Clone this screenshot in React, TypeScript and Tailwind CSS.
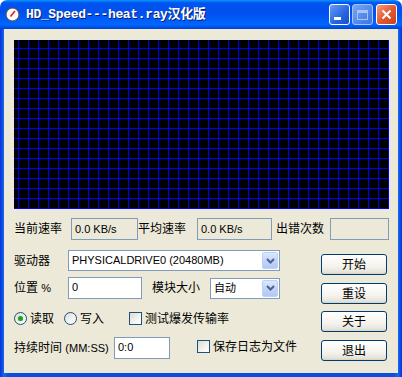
import React from 'react';

const FONT = "font-['Liberation_Sans','Noto_Sans_CJK_SC',sans-serif]";

function SpeedGrid() {
  const xs = Array.from({ length: 38 }, (_, i) => 4.5 + i * 10);
  const ys = Array.from({ length: 17 }, (_, i) => 8.5 + i * 10);
  return (
    <svg width="375" height="169" className="block bg-black">
      {xs.map(x => (
        <line key={'x' + x} x1={x} y1={0} x2={x} y2={169} stroke="#0000f0" strokeWidth="1" />
      ))}
      {ys.map(y => (
        <line key={'y' + y} x1={0} y1={y} x2={375} y2={y} stroke="#0000f0" strokeWidth="1" />
      ))}
    </svg>
  );
}

function ReadBox({ w, text }: { w: string; text?: string }) {
  return (
    <div className={`${w} h-[22px] border border-[#7f9db9] bg-[#ece9d8] pl-[3px] flex items-center text-[11px] text-black`}>
      {text}
    </div>
  );
}

function EditBox({ w, text }: { w: string; text: string }) {
  return (
    <div className={`${w} h-[22px] border border-[#7f9db9] bg-white pl-[3px] pt-[2px] text-[11px] text-black leading-[14px]`}>
      {text}
    </div>
  );
}

function ComboBox({ w, text }: { w: string; text: string }) {
  return (
    <div className={`${w} h-[21px] border border-[#7f9db9] bg-white flex items-center p-[1px]`}>
      <span className="flex-1 pl-[2px] text-[11px] text-black whitespace-nowrap overflow-hidden">{text}</span>
      <div className="w-[16px] h-full rounded-[2px] border border-[#bcd0f8] bg-[linear-gradient(180deg,#dde8ff_0%,#c3d4fb_50%,#b4c8f6_100%)] flex items-center justify-center">
        <svg width="9" height="6" viewBox="0 0 9 6">
          <path d="M1 1 L4.5 4.5 L8 1" stroke="#4d6185" strokeWidth="2" fill="none" />
        </svg>
      </div>
    </div>
  );
}

function XpButton({ label, className = '' }: { label: string; className?: string }) {
  return (
    <div className={`w-[66px] h-[21px] rounded-[3px] border border-[#003c74] bg-[linear-gradient(180deg,#ffffff_0%,#f4f3ee_60%,#e6e3d9_90%,#d6d0c5_100%)] flex items-center justify-center text-[12px] text-black ${className}`}>
      {label}
    </div>
  );
}

function Radio({ checked }: { checked?: boolean }) {
  return (
    <div className="w-[13px] h-[13px] rounded-full border border-[#1c5180] bg-[linear-gradient(135deg,#dcdcd7_0%,#f4f4f0_60%,#ffffff_100%)] flex items-center justify-center">
      {checked && <div className="w-[5px] h-[5px] rounded-full bg-[#21a121] shadow-[0_0_1px_#8ad58a]" />}
    </div>
  );
}

function Check() {
  return (
    <div className="w-[13px] h-[13px] border border-[#1c5180] bg-[linear-gradient(135deg,#dcdcd7_0%,#f4f4f0_60%,#ffffff_100%)]" />
  );
}

function TitleBar() {
  return (
    <div className="h-[29px] flex items-center rounded-t-[7px] bg-[linear-gradient(180deg,#0997ff_0%,#0053ee_10%,#0050ee_45%,#0066ff_85%,#0042d4_100%)] pl-[5px] pr-[5px]">
      <svg width="15" height="15" viewBox="0 0 15 15" className="mr-[6px]">
        <circle cx="7.5" cy="7.5" r="6.5" fill="#ffffff" stroke="#5a5a5a" strokeWidth="1.2" />
        <line x1="5.5" y1="9.5" x2="10" y2="4" stroke="#e02020" strokeWidth="1.6" />
      </svg>
      <span className="font-['Liberation_Mono','Noto_Sans_CJK_SC',monospace] font-bold text-[13px] tracking-[-0.35px] text-white [text-shadow:1px_1px_#0a1d6e]">
        HD_Speed---heat.ray汉化版
      </span>
      <div className="ml-auto flex gap-[2px]">
        <div className="w-[21px] h-[21px] rounded-[3px] border border-white bg-[linear-gradient(135deg,#6a9cf6_0%,#2663e0_60%,#1a4fc8_100%)] flex items-end pl-[4px] pb-[4px]">
          <div className="w-[7px] h-[3px] bg-white" />
        </div>
        <div className="w-[21px] h-[21px] rounded-[3px] border border-[#a9c3f5] bg-[linear-gradient(135deg,#7aa6f6_0%,#5088ec_60%,#3f74e0_100%)] flex items-center justify-center">
          <div className="w-[11px] h-[10px] border border-[#a9c3f5] border-t-[3px]" />
        </div>
        <div className="ml-[1px] w-[21px] h-[21px] rounded-[3px] border border-white bg-[linear-gradient(135deg,#f0a080_0%,#e35a32_50%,#c9401c_100%)] flex items-center justify-center">
          <svg width="11" height="11" viewBox="0 0 11 11">
            <path d="M1.5 1.5 L9.5 9.5 M9.5 1.5 L1.5 9.5" stroke="#ffffff" strokeWidth="2" />
          </svg>
        </div>
      </div>
    </div>
  );
}

export default function App() {
  return (
    <div className={`w-[402px] h-[377px] flex flex-col bg-white ${FONT}`}>
      <TitleBar />
      <div className="flex-1 flex bg-[linear-gradient(90deg,#0831d9_0%,#166aee_1%,#0a4ee0_2%,#0a4ee0_98%,#166aee_99%,#0831d9_100%)] px-[4px] pb-[4px]">
        <div className="flex-1 bg-[#ece9d8] pl-[10px] pt-[11px] text-[12px] text-black">
          <SpeedGrid />

          <div className="mt-[9px] h-[22px] flex items-center">
            <span className="w-[57px]">当前速率</span>
            <ReadBox w="w-[67px]" text="0.0 KB/s" />
            <span className="w-[59px]">平均速率</span>
            <ReadBox w="w-[75px]" text="0.0 KB/s" />
            <span className="ml-[4px] w-[54px]">出错次数</span>
            <ReadBox w="w-[59px]" />
          </div>

          <div className="mt-[10px] flex">
            <div className="w-[307px] flex flex-col">
              <div className="h-[21px] flex items-center">
                <span className="w-[54px]">驱动器</span>
                <ComboBox w="w-[212px]" text="PHYSICALDRIVE0 (20480MB)" />
              </div>
              <div className="mt-[6px] h-[22px] flex items-center">
                <span className="w-[54px]">位置 <span className="text-[11px]">%</span></span>
                <EditBox w="w-[74px]" text="0" />
                <span className="ml-[10px] w-[58px]">模块大小</span>
                <ComboBox w="w-[70px]" text="自动" />
              </div>
              <div className="mt-[13px] h-[13px] flex items-center">
                <Radio checked />
                <span className="ml-[3px]">读取</span>
                <div className="ml-[10px]"><Radio /></div>
                <span className="ml-[3px]">写入</span>
                <div className="ml-[25px]"><Check /></div>
                <span className="ml-[3px]">测试爆发传输率</span>
              </div>
              <div className="mt-[12px] h-[22px] flex items-center">
                <span className="w-[100px]">持续时间 <span className="text-[11px]">(MM:SS)</span></span>
                <EditBox w="w-[56px]" text="0:0" />
                <div className="ml-[27px] -mt-[3px]"><Check /></div>
                <span className="ml-[3px] -mt-[3px]">保存日志为文件</span>
              </div>
            </div>
            <div className="mt-[4px] flex flex-col">
              <XpButton label="开始" />
              <XpButton label="重设" className="mt-[8px]" />
              <XpButton label="关于" className="mt-[7px]" />
              <XpButton label="退出" className="mt-[8px]" />
            </div>
          </div>
        </div>
      </div>
    </div>
  );
}
